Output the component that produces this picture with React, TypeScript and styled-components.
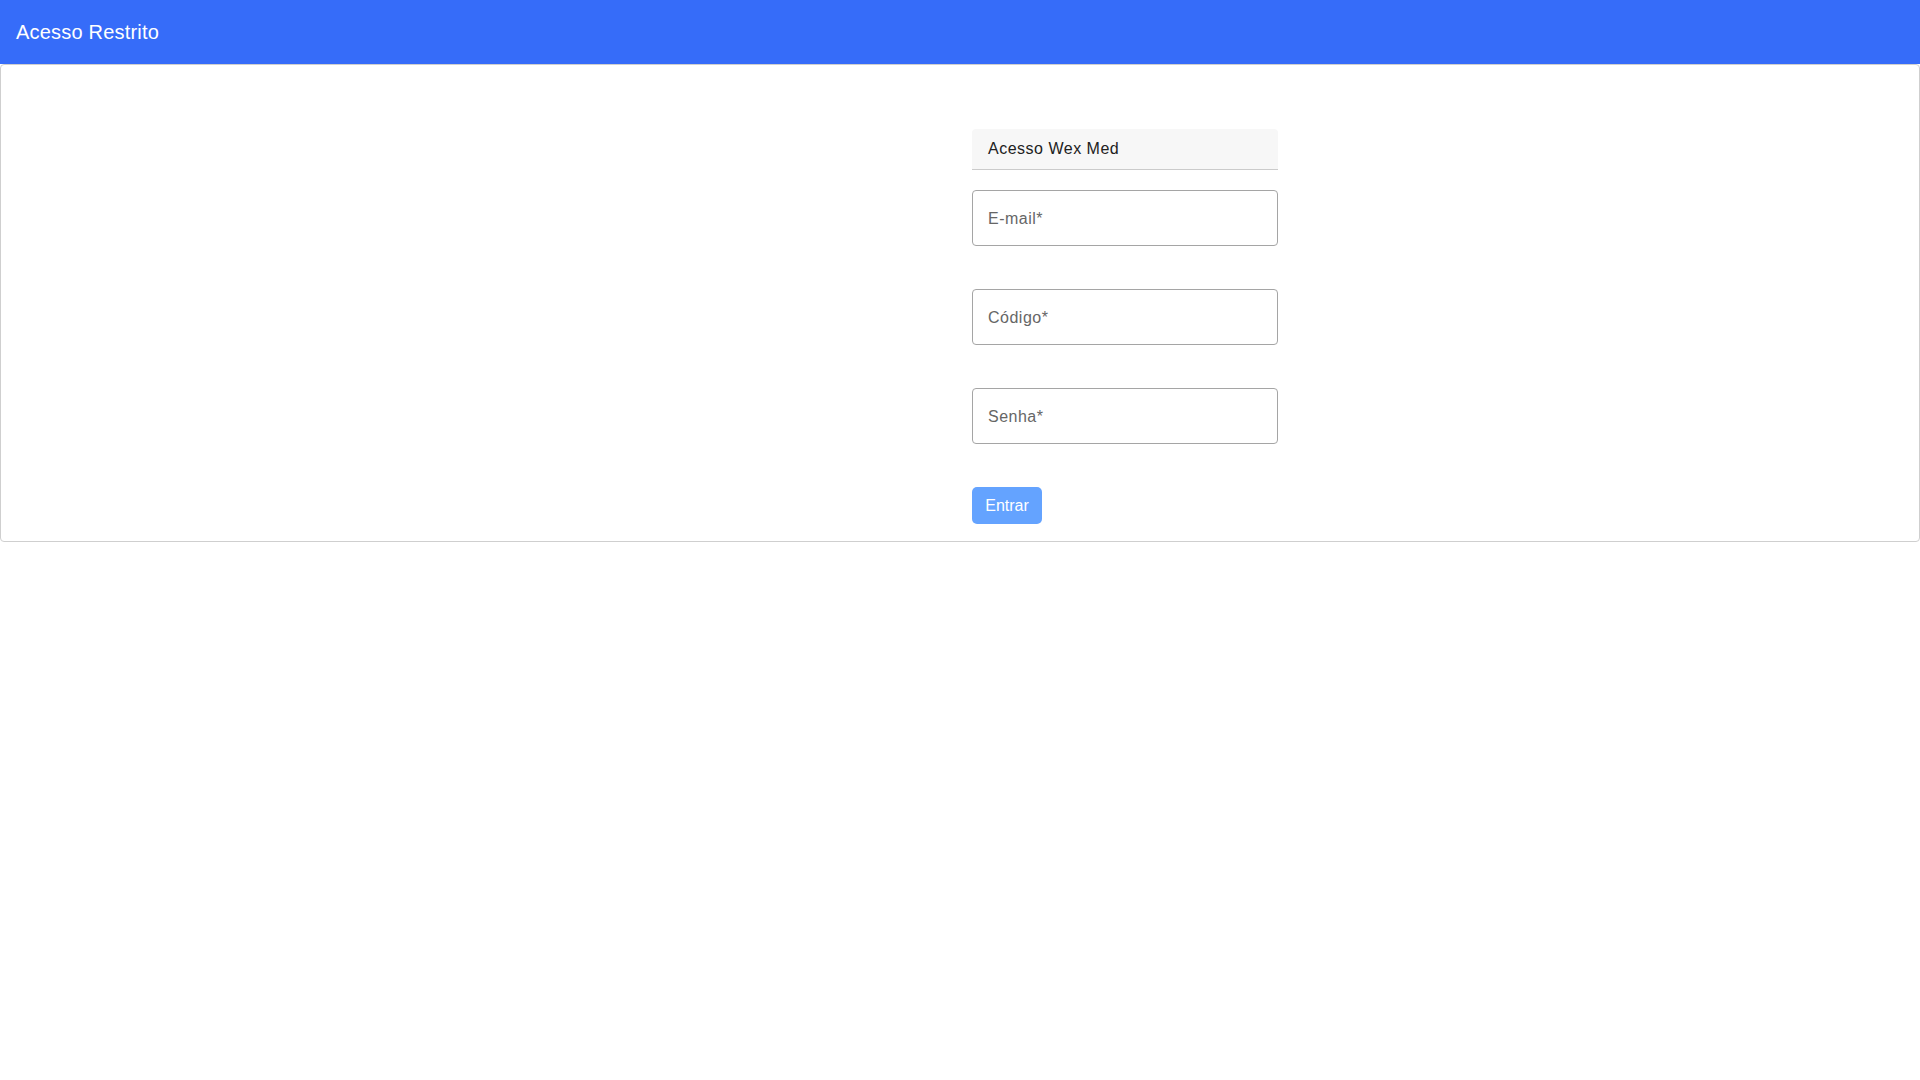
import React from 'react';
import styled, { createGlobalStyle } from 'styled-components';

const GlobalStyle = createGlobalStyle`
  html, body {
    margin: 0;
    padding: 0;
    background: #fff;
  }
  body {
    font-family: "Liberation Sans", Arial, sans-serif;
  }
  * {
    box-sizing: border-box;
  }
`;

const TopBar = styled.header`
  height: 64px;
  background: #366cf9;
  display: flex;
  align-items: center;
  padding: 0 16px;
`;

const TopTitle = styled.h1`
  margin: 0;
  font-family: "Liberation Sans", Arial, sans-serif;
  font-size: 20px;
  font-weight: 400;
  color: #fff;
  letter-spacing: 0.2px;
`;

const Card = styled.section`
  border: 1px solid #cfcfcf;
  border-radius: 4px;
  padding: 64px 0 17px calc(50% + 11px);
`;

const Form = styled.form`
  width: 306px;
  display: flex;
  flex-direction: column;
`;

const FormHeading = styled.div`
  height: 41px;
  background: #f7f7f7;
  border-bottom: 1px solid #cbcbcb;
  border-radius: 4px 4px 0 0;
  padding: 0 16px;
  display: flex;
  align-items: center;
  font-family: "Liberation Sans", Arial, sans-serif;
  font-size: 16px;
  letter-spacing: 0.5px;
  color: #212121;
`;

const Field = styled.label<{ $gap: number }>`
  margin-top: ${(p) => p.$gap}px;
  height: 56px;
  border: 1px solid #a5a5a5;
  border-radius: 4px;
  display: flex;
  align-items: center;
  padding: 2px 15px 0;
  cursor: text;
`;

const FieldLabel = styled.span`
  font-family: "Liberation Sans", Arial, sans-serif;
  font-size: 16px;
  letter-spacing: 0.5px;
  color: #666;
`;

const SubmitButton = styled.button`
  margin-top: 43px;
  align-self: flex-start;
  width: 70px;
  height: 37px;
  border: none;
  border-radius: 5px;
  background: #64a3ff;
  color: #fff;
  font-family: "Liberation Sans", Arial, sans-serif;
  font-size: 16px;
  cursor: pointer;
`;

const fields = ['E-mail*', 'Código*', 'Senha*'];

export default function App() {
  return (
    <>
      <GlobalStyle />
      <TopBar>
        <TopTitle>Acesso Restrito</TopTitle>
      </TopBar>
      <Card>
        <Form onSubmit={(e) => e.preventDefault()}>
          <FormHeading>Acesso Wex Med</FormHeading>
          {fields.map((f, i) => (
            <Field key={f} $gap={i === 0 ? 20 : 43}>
              <FieldLabel>{f}</FieldLabel>
            </Field>
          ))}
          <SubmitButton type="submit">Entrar</SubmitButton>
        </Form>
      </Card>
    </>
  );
}
